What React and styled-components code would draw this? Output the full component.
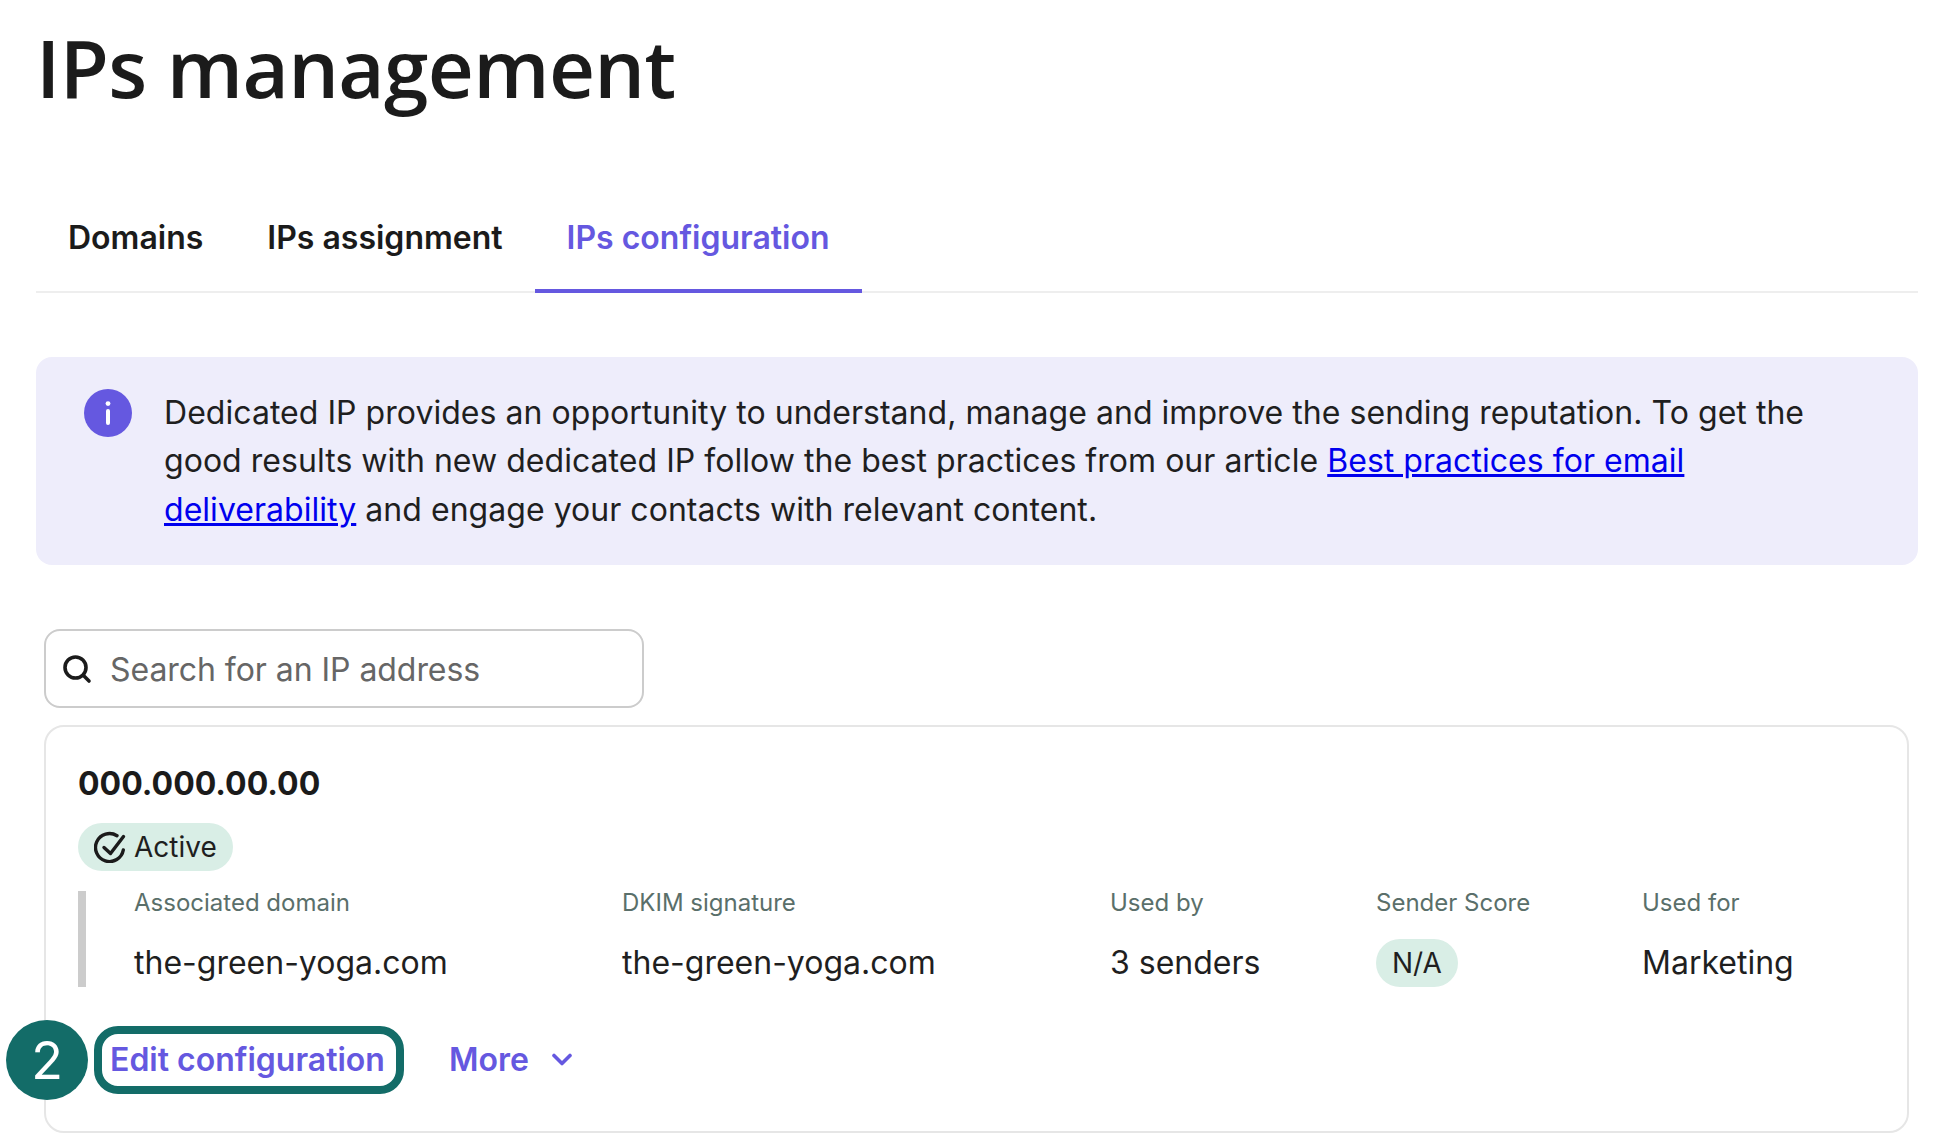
import React from "react";
import styled, { createGlobalStyle } from "styled-components";

const Global = createGlobalStyle`
  html, body { margin: 0; padding: 0; background: #fff; }
  body { font-family: Inter, "Liberation Sans", sans-serif; color: #1f1f1f; }
`;

const Page = styled.main`
  width: 1946px;
  height: 1146px;
  overflow: hidden;
  box-sizing: border-box;
  padding: 0 28px 0 36px;
`;

const Title = styled.h1`
  margin: 0;
  padding-top: 19px;
  height: 154px;
  box-sizing: border-box;
  font-family: "Open Sans", sans-serif;
  font-size: 80px;
  line-height: 96px;
  font-weight: 560;
  letter-spacing: -0.65px;
  color: #1b1b1b;
`;

const Tabs = styled.nav`
  display: flex;
  height: 139px;
  box-sizing: border-box;
  border-bottom: 2px solid #eeeeee;
`;

const Tab = styled.a`
  display: flex;
  align-items: flex-start;
  box-sizing: border-box;
  height: 139px;
  padding: 64px 32px 0;
  font-size: 32px;
  line-height: 40px;
  font-weight: 600;
  color: ${(p) => (p.$active ? "#6558e0" : "#1b1b1b")};
  border-bottom: ${(p) => (p.$active ? "4px solid #6558e0" : "none")};
`;

const Banner = styled.section`
  display: flex;
  gap: 32px;
  box-sizing: border-box;
  margin-top: 64px;
  height: 208px;
  padding: 32px 48px;
  background: #eeedfb;
  border-radius: 16px;
`;

const InfoDot = styled.span`
  flex: none;
  display: flex;
  align-items: center;
  justify-content: center;
  width: 48px;
  height: 48px;
  border-radius: 50%;
  background: #6558e0;
`;

const BannerText = styled.p`
  margin: 0;
  font-size: 32px;
  line-height: 48.3px;
  letter-spacing: 0.04px;
  color: #1f1f1f;
`;

const Link = styled.a`
  color: #0000ee;
  text-decoration: underline;
`;

const Content = styled.div`
  padding: 64px 9px 0 8px;
`;

const Search = styled.label`
  display: flex;
  align-items: center;
  gap: 18px;
  box-sizing: border-box;
  width: 600px;
  height: 79px;
  padding: 1px 16px 0;
  border: 2px solid #cccccc;
  border-radius: 16px;
  font-size: 32px;
  letter-spacing: -0.05px;
  color: #666666;
`;

const Card = styled.article`
  position: relative;
  box-sizing: border-box;
  margin-top: 17px;
  height: 408px;
  padding: 37px 32px 0;
  border: 2px solid #e6e6e6;
  border-radius: 20px;
`;

const Ip = styled.h2`
  margin: 0;
  font-size: 32px;
  line-height: 40px;
  font-weight: 700;
  color: #1b1b1b;
`;

const Pill = styled.span`
  display: inline-flex;
  align-items: center;
  justify-content: center;
  gap: 8px;
  box-sizing: border-box;
  height: 48px;
  padding: 0 16px;
  border-radius: 24px;
  background: #d9eee6;
  font-size: 28px;
  color: #1f1f1f;
`;

const StatusRow = styled.div`
  display: flex;
  margin-top: 19px;
`;

const Details = styled.div`
  display: grid;
  grid-template-columns: 488px 488px 266px 266px 1fr;
  box-sizing: border-box;
  margin-top: 20px;
  height: 96px;
  padding-left: 48px;
  border-left: 8px solid #cccccc;
`;

const Column = styled.div`
  display: flex;
  flex-direction: column;
  align-items: flex-start;
`;

const Label = styled.span`
  height: 48px;
  font-size: 24px;
  line-height: 24px;
  color: #5a6f6a;
`;

const Value = styled.span`
  height: 48px;
  font-size: 32px;
  line-height: 48px;
  color: #1f1f1f;
`;

const Actions = styled.div`
  display: flex;
  align-items: center;
  margin-top: 39px;
  margin-left: 16px;
`;

const EditButton = styled.a`
  display: flex;
  align-items: center;
  box-sizing: border-box;
  width: 310px;
  height: 68px;
  padding: 0 8px 2px;
  border: 8px solid #136c68;
  border-radius: 24px;
  font-size: 32px;
  font-weight: 600;
  color: #6558e0;
  white-space: nowrap;
`;

const MoreButton = styled.a`
  display: flex;
  align-items: center;
  gap: 23px;
  margin-left: 45px;
  padding-bottom: 2px;
  font-size: 32px;
  font-weight: 600;
  color: #6558e0;
`;

const StepBadge = styled.span`
  position: absolute;
  left: -40px;
  top: 293px;
  display: flex;
  align-items: center;
  justify-content: center;
  width: 82px;
  height: 80px;
  border-radius: 50%;
  background: #136c68;
  color: #fff;
  font-size: 52px;
  font-weight: 400;
`;

export default function App() {
  return (
    <>
      <Global />
      <Page>
        <Title>IPs management</Title>
        <Tabs>
          <Tab>Domains</Tab>
          <Tab>IPs assignment</Tab>
          <Tab $active>IPs configuration</Tab>
        </Tabs>
        <Banner>
          <InfoDot>
            <svg width="6" height="24" viewBox="0 0 6 24" fill="#fff">
              <circle cx="3" cy="2.6" r="2.4" />
              <rect x="1" y="8" width="4" height="16" rx="2" />
            </svg>
          </InfoDot>
          <BannerText>
            Dedicated IP provides an opportunity to understand, manage and improve the sending reputation. To get the good results with new dedicated IP follow the best practices from our article{" "}
            <Link>Best practices for email deliverability</Link> and engage your contacts with relevant content.
          </BannerText>
        </Banner>
        <Content>
          <Search>
            <svg width="30" height="30" viewBox="0 0 30 30" fill="none" stroke="#1b1b1b" strokeWidth="3.6" strokeLinecap="round">
              <circle cx="13.5" cy="13.5" r="10.5" />
              <path d="M21.5 21.5L27 27" />
            </svg>
            Search for an IP address
          </Search>
          <Card>
            <Ip>000.000.00.00</Ip>
            <StatusRow>
              <Pill>
                <svg width="32" height="32" viewBox="0 0 32 32" fill="none" stroke="#1b1b1b" strokeWidth="3.4" strokeLinecap="round" strokeLinejoin="round">
                  <path d="M23 4.7A14 14 0 1 0 29.3 19" />
                  <path d="M10 16.5L16.5 22.5L29.5 5.5" />
                </svg>
                Active
              </Pill>
            </StatusRow>
            <Details>
              <Column>
                <Label>Associated domain</Label>
                <Value>the-green-yoga.com</Value>
              </Column>
              <Column>
                <Label>DKIM signature</Label>
                <Value>the-green-yoga.com</Value>
              </Column>
              <Column>
                <Label>Used by</Label>
                <Value>3 senders</Value>
              </Column>
              <Column>
                <Label>Sender Score</Label>
                <Pill>N/A</Pill>
              </Column>
              <Column>
                <Label>Used for</Label>
                <Value>Marketing</Value>
              </Column>
            </Details>
            <Actions>
              <EditButton>Edit configuration</EditButton>
              <MoreButton>
                More
                <svg width="20" height="13" viewBox="0 0 20 13" fill="none" stroke="#6558e0" strokeWidth="3.6" strokeLinecap="round" strokeLinejoin="round">
                  <path d="M2 2.5l8 8 8-8" />
                </svg>
              </MoreButton>
            </Actions>
            <StepBadge>2</StepBadge>
          </Card>
        </Content>
      </Page>
    </>
  );
}
